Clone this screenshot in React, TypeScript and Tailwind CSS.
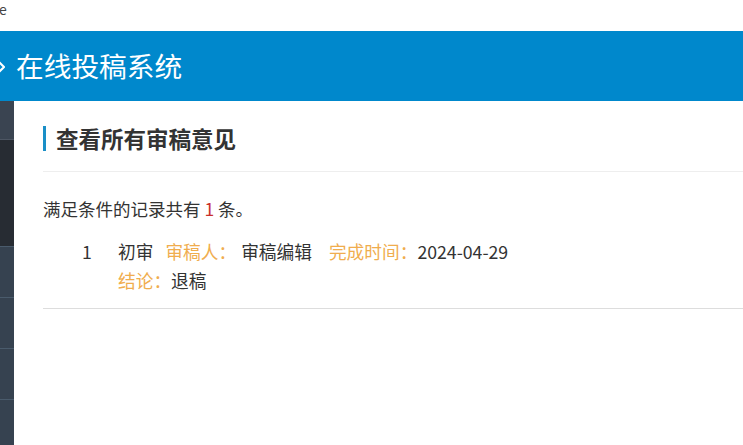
export default function App() {
  const font = { fontFamily: '"Noto Sans CJK SC", "Noto Sans", sans-serif' };

  return (
    <div className="w-[743px] h-[445px] overflow-hidden bg-white flex flex-col text-[#333]" style={font}>
      {/* top strip */}
      <div className="h-[31px] shrink-0 px-0">
        <span className="block text-[14px] leading-[16px] text-[#444] -ml-[1px] pt-[1px]">e</span>
      </div>

      {/* header */}
      <div className="h-[70px] shrink-0 bg-[#0088cc] flex items-center">
        <svg width="8" height="16" viewBox="0 0 8 16" className="-ml-[3px] mt-[2px]">
          <polyline points="1,2 7,8 1,14" fill="none" stroke="#fff" strokeWidth="2" />
        </svg>
        <span className="ml-[11px] text-[27.7px] leading-none text-white">在线投稿系统</span>
      </div>

      <div className="flex flex-1 min-h-0">
        {/* sidebar */}
        <div className="w-[14px] shrink-0 flex flex-col">
          <div className="h-[38px] bg-[#3a4451]" />
          <div className="h-[1px] bg-[#4d5663]" />
          <div className="h-[106px] bg-[#272c33]" />
          <div className="h-[1px] bg-[#4a5b6c]" />
          <div className="h-[50px] bg-[#364250]" />
          <div className="h-[1px] bg-[#4a5b6c]" />
          <div className="h-[50px] bg-[#364250]" />
          <div className="h-[1px] bg-[#4a5b6c]" />
          <div className="h-[50px] bg-[#364250]" />
          <div className="h-[1px] bg-[#4a5b6c]" />
          <div className="flex-1 bg-[#364250]" />
        </div>

        {/* main */}
        <div className="flex-1 pl-[29px] pt-[25px]">
          <div className="h-[25px] border-l-[3px] border-[#1a8fc7] pl-[10px] flex items-center">
            <h2 className="text-[22.5px] font-bold leading-none text-[#333]">查看所有审稿意见</h2>
          </div>
          <div className="mt-[20px] border-t border-[#eeeeee]" />

          <p className="mt-[25px] text-[17.5px] leading-[24px]">
            满足条件的记录共有 <span className="text-[#c9302c]">1</span> 条。
          </p>

          <div className="mt-[16px] flex text-[17.7px] leading-[29px]">
            <div className="w-[75px] pl-[39px]">1</div>
            <div>
              <div className="flex">
                <span>初审</span>
                <span className="ml-[12px] text-[#f0ad4e]">审稿人：</span>
                <span className="ml-[5px]">审稿编辑</span>
                <span className="ml-[17px] text-[#f0ad4e]">完成时间：</span>
                <span>2024-04-29</span>
              </div>
              <div className="flex">
                <span className="text-[#f0ad4e]">结论：</span>
                <span>退稿</span>
              </div>
            </div>
          </div>
          <div className="mt-[13px] border-t border-[#dddddd]" />
        </div>
      </div>
    </div>
  );
}
